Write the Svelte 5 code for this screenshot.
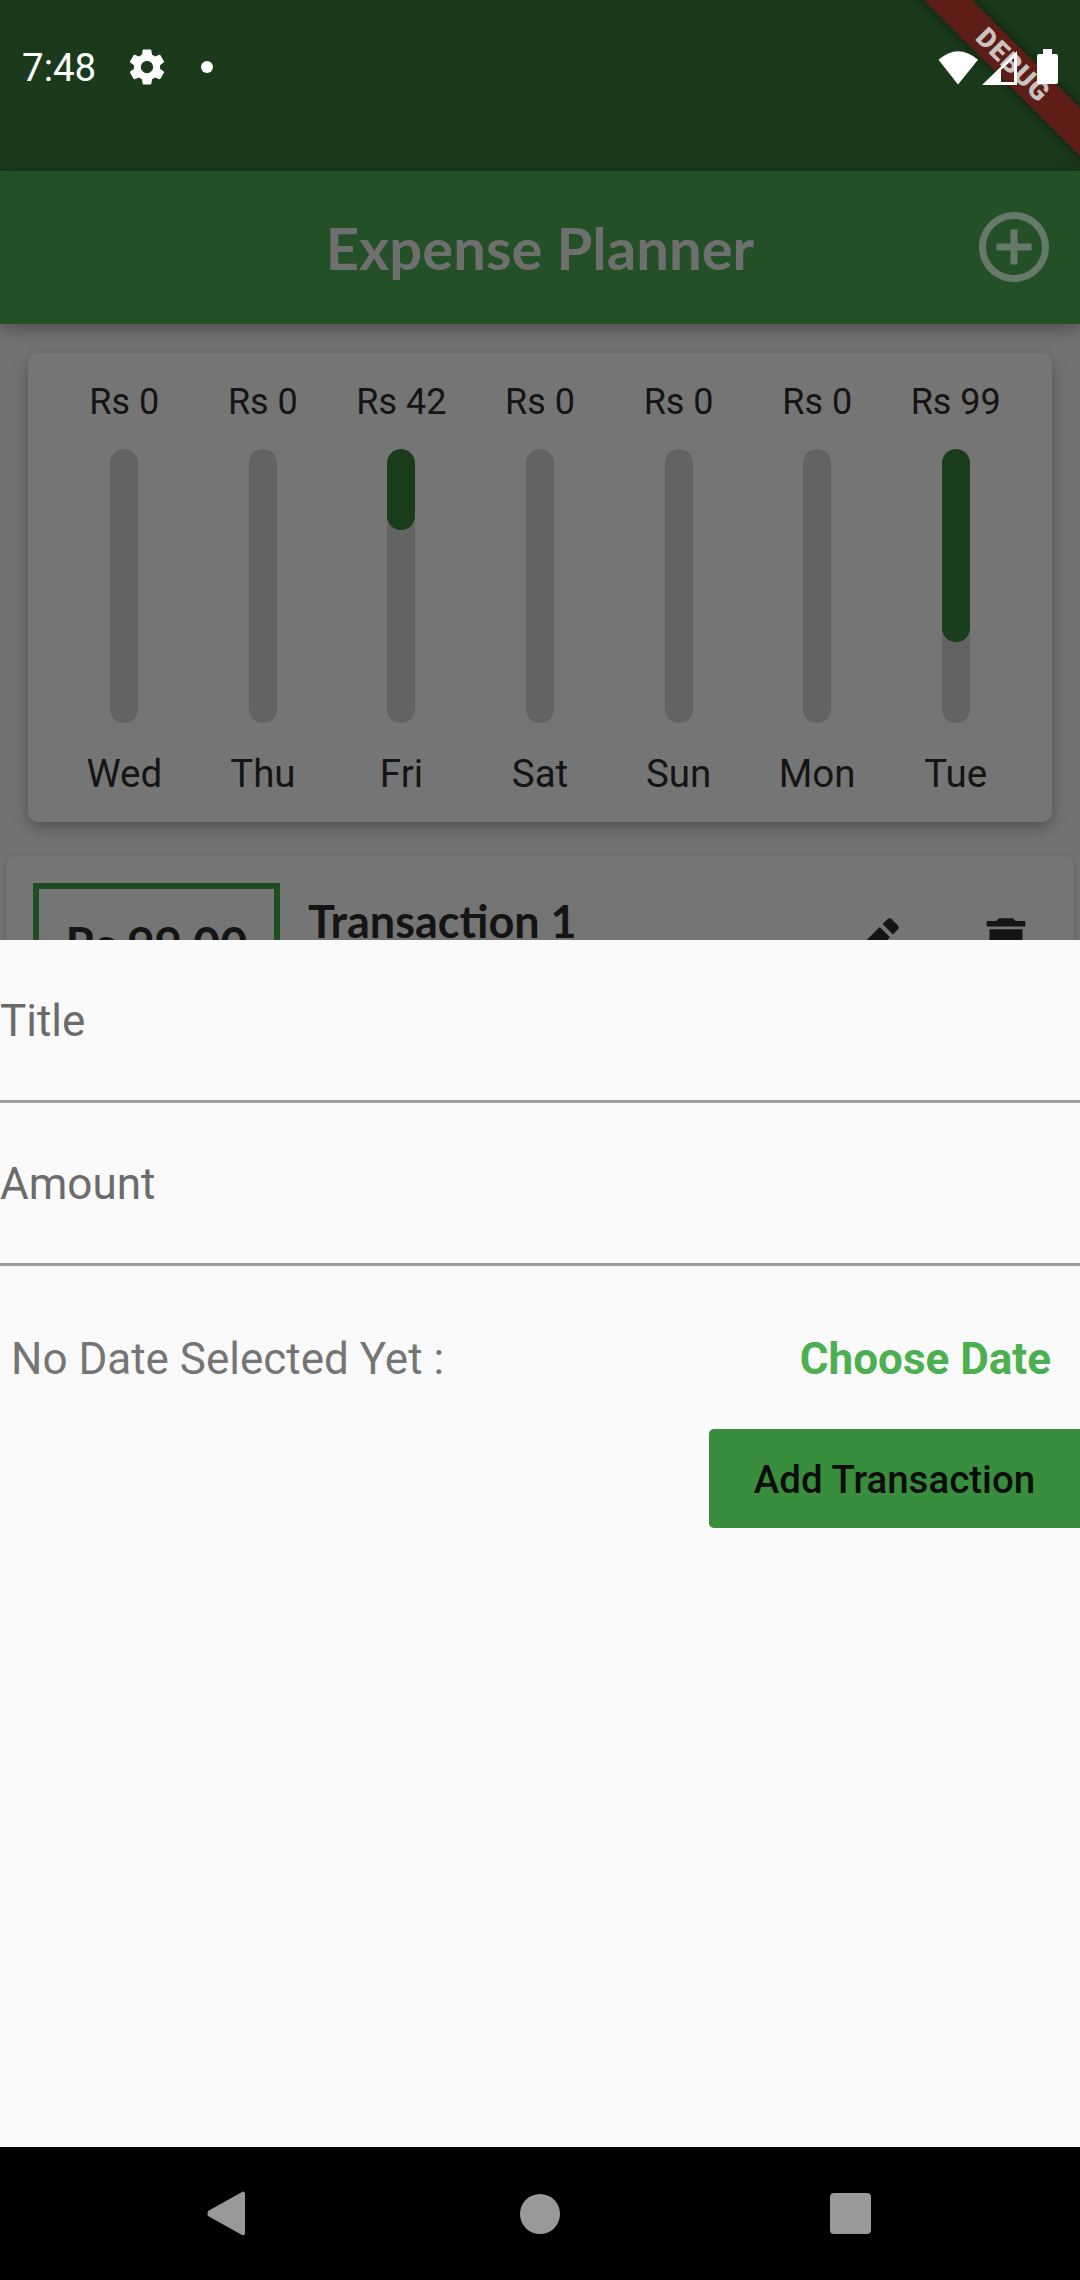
<script>
    let days = [
        { day: 'Wed', amount: 'Rs 0', fill: 0 },
        { day: 'Thu', amount: 'Rs 0', fill: 0 },
        { day: 'Fri', amount: 'Rs 42', fill: 81 },
        { day: 'Sat', amount: 'Rs 0', fill: 0 },
        { day: 'Sun', amount: 'Rs 0', fill: 0 },
        { day: 'Mon', amount: 'Rs 0', fill: 0 },
        { day: 'Tue', amount: 'Rs 99', fill: 193 },
    ];
</script>

<div class="app">
    <div class="banner"><span>DEBUG</span></div>

    <header class="status">
        <span class="time">7:48</span>
        <svg class="gear" viewBox="0 0 24 24" fill="#fff">
            <path d="M19.43 12.98c.04-.32.07-.64.07-.98s-.03-.66-.07-.98l2.11-1.65c.19-.15.24-.42.12-.64l-2-3.46c-.12-.22-.39-.3-.61-.22l-2.49 1c-.52-.4-1.08-.73-1.69-.98l-.38-2.65C14.46 2.18 14.25 2 14 2h-4c-.25 0-.46.18-.49.42l-.38 2.65c-.61.25-1.17.59-1.69.98l-2.49-1c-.23-.09-.49 0-.61.22l-2 3.46c-.13.22-.07.49.12.64l2.11 1.65c-.04.32-.07.65-.07.98s.03.66.07.98l-2.11 1.65c-.19.15-.24.42-.12.64l2 3.46c.12.22.39.3.61.22l2.49-1c.52.4 1.08.73 1.69.98l.38 2.65c.03.24.24.42.49.42h4c.25 0 .46-.18.49-.42l.38-2.65c.61-.25 1.17-.59 1.69-.98l2.49 1c.23.09.49 0 .61-.22l2-3.46c.12-.22.07-.49-.12-.64l-2.11-1.65zM12 15.5c-1.93 0-3.5-1.57-3.5-3.5s1.57-3.5 3.5-3.5 3.5 1.57 3.5 3.5-1.57 3.5-3.5 3.5z" />
        </svg>
        <span class="dot"></span>
        <span class="spacer"></span>
        <svg class="wifi" viewBox="0 0 42 35" fill="#fff"><path d="M0.5 9.5 Q20.5 -8 41 9.5 L20.5 35 z" /></svg>
        <svg class="signal" viewBox="0 0 35 34" fill="#fff" fill-rule="evenodd"><path d="M0 34 L35 0 V34 z M19 31 H32 V7 L19 19 z" /></svg>
        <svg class="battery" viewBox="0 0 21 35" fill="#fff"><path d="M6 0 H15 V5 H19 Q21 5 21 7 V33 Q21 35 19 35 H2 Q0 35 0 33 V7 Q0 5 2 5 H6 z" /></svg>
    </header>

    <div class="appbar">
        <h1>Expense Planner</h1>
        <svg class="add" viewBox="0 0 24 24" fill="#66796a">
            <path d="M13 7h-2v4H7v2h4v4h2v-4h4v-2h-4V7zm-1-5C6.48 2 2 6.48 2 12s4.48 10 10 10 10-4.48 10-10S17.52 2 12 2zm0 18c-4.41 0-8-3.59-8-8s3.59-8 8-8 8 3.59 8 8-3.59 8-8 8z" />
        </svg>
    </div>

    <main class="content">
        <section class="chart">
            {#each days as d}
                <div class="col">
                    <span class="amount">{d.amount}</span>
                    <div class="track">
                        <div class="fill" style="height: {d.fill}px"></div>
                    </div>
                    <span class="day">{d.day}</span>
                </div>
            {/each}
        </section>

        <section class="tx">
            <div class="price"><span>Rs 99.00</span></div>
            <div class="tx-title">Transaction 1</div>
            <svg class="tx-icon" viewBox="0 0 24 24" fill="#141414">
                <path d="M3 17.25V21h3.75L17.81 9.94l-3.75-3.75L3 17.25zM20.71 7.04c.39-.39.39-1.02 0-1.41l-2.34-2.34c-.39-.39-1.02-.39-1.41 0l-1.83 1.83 3.75 3.75 1.83-1.83z" />
            </svg>
            <svg class="tx-icon" viewBox="0 0 24 24" fill="#141414">
                <path d="M6 19c0 1.1.9 2 2 2h8c1.1 0 2-.9 2-2V7H6v12zM19 4h-3.5l-1-1h-5l-1 1H5v2h14V4z" />
            </svg>
        </section>
    </main>

    <section class="sheet">
        <div class="field">Title</div>
        <div class="field">Amount</div>
        <div class="date-row">
            <span class="no-date">No Date Selected Yet :</span>
            <span class="choose">Choose Date</span>
        </div>
        <div class="submit-row">
            <div class="submit">Add Transaction</div>
        </div>
    </section>

    <nav class="nav">
        <svg class="back" viewBox="0 0 38 45" fill="#999"><path d="M36 0.5 Q38 0 38 3 V42 Q38 45 35 44 L1 25 Q0 22.5 1 20 z" /></svg>
        <span class="home"></span>
        <span class="recent"></span>
    </nav>
</div>

<style>
    :global(body) {
        margin: 0;
        background: #000;
    }

    .app {
        position: relative;
        width: 1080px;
        height: 2280px;
        display: flex;
        flex-direction: column;
        overflow: hidden;
        font-family: Roboto, sans-serif;
    }

    /* debug ribbon, sits under the system icons */
    .banner {
        position: absolute;
        left: 863px;
        top: 48px;
        width: 300px;
        height: 34px;
        transform: rotate(45deg);
        background: #5f1d17;
        box-shadow: 0 0 16px rgba(0, 0, 0, 0.5);
        display: flex;
        align-items: center;
        justify-content: center;
        z-index: 1;
    }

    .banner span {
        font-family: Roboto, sans-serif;
        font-weight: 900;
        font-size: 27px;
        letter-spacing: 1px;
        color: #c9c3c2;
    }

    .status {
        height: 171px;
        box-sizing: border-box;
        padding: 46px 22px 0 22px;
        background: #1b3a1c;
        display: flex;
        align-items: flex-start;
        color: #fff;
    }

    .time {
        font-size: 38.5px;
        line-height: 44px;
    }

    .gear {
        width: 42px;
        height: 42px;
        margin-left: 30px;
    }

    .dot {
        width: 12px;
        height: 12px;
        border-radius: 50%;
        background: #fff;
        margin-left: 33px;
        margin-top: 15px;
    }

    .spacer {
        flex: 1;
    }

    .wifi,
    .signal,
    .battery {
        position: relative;
        z-index: 2;
    }

    .wifi {
        width: 41px;
        height: 35px;
        margin-top: 4px;
    }

    .signal {
        width: 35px;
        height: 34px;
        margin-top: 5px;
        margin-left: 3px;
    }

    .battery {
        width: 21px;
        height: 35px;
        margin-top: 3px;
        margin-left: 20px;
    }

    .appbar {
        position: relative;
        z-index: 1;
        height: 153px;
        flex: none;
        background: #235026;
        display: flex;
        align-items: center;
        justify-content: center;
        box-shadow: 0 5px 16px rgba(0, 0, 0, 0.32);
    }

    h1 {
        margin: 0;
        font-family: Lato, sans-serif;
        font-weight: 700;
        font-size: 58px;
        color: #6f6f6f;
    }

    .add {
        position: absolute;
        right: 24px;
        top: 34px;
        width: 84px;
        height: 84px;
    }

    .content {
        height: 616px;
        flex: none;
        box-sizing: border-box;
        padding-top: 29px;
        background: #737373;
        overflow: hidden;
    }

    .chart {
        margin: 0 28px;
        padding: 28px 27px 25px;
        background: #757575;
        border-radius: 10px;
        display: flex;
        box-shadow: 0 6px 16px rgba(0, 0, 0, 0.3);
    }

    .col {
        flex: 1;
        display: flex;
        flex-direction: column;
        align-items: center;
        color: #141414;
    }

    .amount {
        font-size: 36px;
        line-height: 42px;
    }

    .track {
        width: 28px;
        height: 274px;
        margin: 26px 0 28px;
        border-radius: 14px;
        background: #636363;
        overflow: hidden;
    }

    .fill {
        border-radius: 14px;
        background: #193c1a;
    }

    .day {
        font-size: 38.5px;
        line-height: 46px;
    }

    .tx {
        margin: 34px 6px 0;
        padding: 27px 27px 60px;
        background: #757575;
        border-radius: 10px;
        display: flex;
        align-items: flex-start;
        box-shadow: 0 2px 6px rgba(0, 0, 0, 0.2);
    }

    .price {
        width: 247px;
        height: 130px;
        box-sizing: border-box;
        border: 6px solid #1f4d22;
        text-align: center;
        padding-top: 25px;
        font-family: Lato, sans-serif;
        font-weight: 700;
        font-size: 47px;
        line-height: 60px;
        color: #141414;
    }

    .tx-title {
        margin-left: 28px;
        margin-top: 19px;
        flex: 1;
        font-family: Lato, sans-serif;
        font-weight: 700;
        font-size: 45px;
        line-height: 38px;
        color: #141414;
    }

    .tx-icon {
        width: 66px;
        height: 66px;
        margin-top: 27px;
        margin-left: 66px;
    }

    .tx-icon:last-child {
        margin-right: 8px;
    }

    .sheet {
        height: 1207px;
        flex: none;
        position: relative;
        z-index: 1;
        background: #fafafa;
    }

    .field {
        height: 163px;
        box-sizing: border-box;
        padding-top: 53px;
        border-bottom: 3px solid #9e9e9e;
        font-size: 44px;
        line-height: 56px;
        color: #6b6b6b;
    }

    .date-row {
        display: flex;
        justify-content: space-between;
        padding: 65px 29px 0 11px;
        font-size: 44px;
        line-height: 56px;
    }

    .no-date {
        color: #757575;
    }

    .choose {
        color: #4caf50;
        font-weight: 700;
    }

    .submit-row {
        display: flex;
        justify-content: flex-end;
        margin-top: 42px;
    }

    .submit {
        width: 371px;
        height: 99px;
        box-sizing: border-box;
        padding-top: 2px;
        border-radius: 5px 0 0 5px;
        background: #388e3c;
        color: #0c0c0c;
        font-size: 38.5px;
        font-weight: 500;
        display: flex;
        align-items: center;
        justify-content: center;
    }

    .nav {
        flex: 1;
        background: #000;
        display: flex;
        align-items: center;
        padding-left: 207px;
    }

    .back {
        width: 38px;
        height: 45px;
    }

    .home {
        width: 40px;
        height: 40px;
        border-radius: 50%;
        background: #999;
        margin-left: 275px;
    }

    .recent {
        width: 41px;
        height: 41px;
        border-radius: 4px;
        background: #999;
        margin-left: 270px;
    }
</style>
